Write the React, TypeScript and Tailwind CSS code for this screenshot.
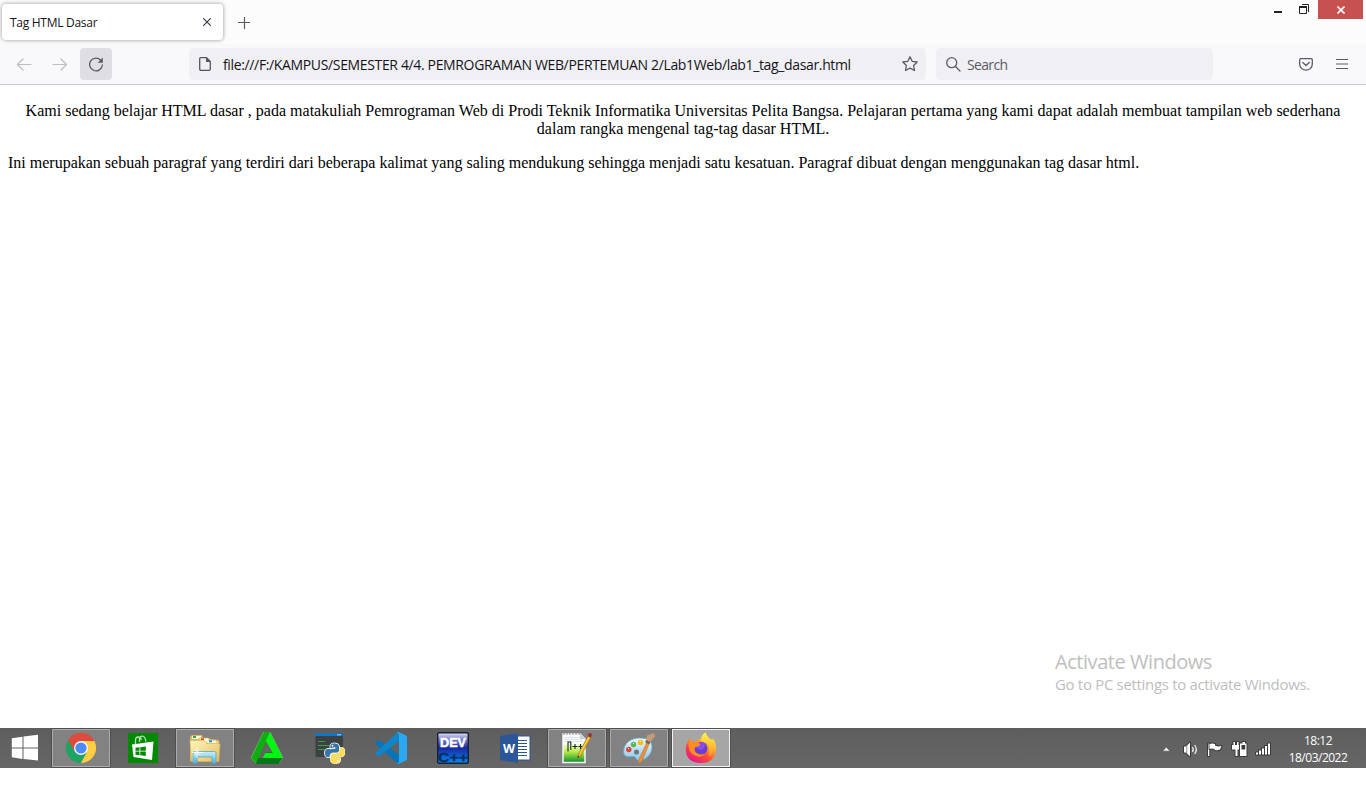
import type { ReactNode } from "react";

const UI = "font-['Open_Sans','Noto_Sans',sans-serif]";

function TaskIcon({ children }: { children: ReactNode }) {
  return (
    <svg width="32" height="32" viewBox="0 0 32 32" className="block">
      {children}
    </svg>
  );
}

function Chrome() {
  return (
    <TaskIcon>
      <path d="M3 8.500A15 15 0 0 1 29.400 9H16L9.600 19.500z" fill="#dd4b3e" />
      <path d="M3.100 8.300A15 15 0 0 0 16 31L22.200 19.500 16 16 9.600 19.500z" fill="#1da462" />
      <path d="M16 31A15 15 0 0 0 29.400 9H16L22.200 19.600z" fill="#ffcd41" />
      <circle cx="16" cy="16" r="7" fill="#f4f4f4" />
      <circle cx="16" cy="16" r="5.600" fill="#4c8bf5" />
    </TaskIcon>
  );
}

function Store() {
  return (
    <TaskIcon>
      <rect x="1" y="1" width="30" height="30" fill="#008a00" />
      <path d="M8.500 12V8.500Q8.500 5 11 5t3.500 3M12.500 10V6.500q.5-2.300 3-2.300t3.500 5.500" fill="none" stroke="#b5e0b5" strokeWidth="1.300" />
      <path d="M5 12.500 26.500 9.500 25 28 6.500 25z" fill="#fff" />
      <path d="M8.500 15.800l4-.5v3.500h-4zM13.300 15.200l5.500-.7v4.300h-5.500zM8.500 19.600h4v3.600l-4-.5zM13.300 19.600h5.500v4.500l-5.500-.8z" fill="#008a00" />
    </TaskIcon>
  );
}

function Explorer() {
  return (
    <TaskIcon>
      <defs>
        <linearGradient id="folder" x1="0" x2="1" y2="1">
          <stop stopColor="#fff6bd" />
          <stop offset="1" stopColor="#e5bd5c" />
        </linearGradient>
        <linearGradient id="stand" x1="0" x2="0" y2="1">
          <stop stopColor="#cceef9" />
          <stop offset="1" stopColor="#52b3db" />
        </linearGradient>
      </defs>
      <path d="M1 5 3 3h10l1 3 16 2v21H1z" fill="#dcb95f" />
      <path d="M3 4h9v3H3z" fill="#fffbe8" />
      <path d="M4 4h3v2H4z" fill="#19b23b" />
      <path d="M10 6h10l1 3h9v20H10z" fill="#f5dc91" stroke="#d2a94c" strokeWidth=".6" />
      <path d="M12 6.500h7v3h-7zM19 8.500h8v2.500h-8z" fill="#fff9e5" />
      <path d="M12 6.300h3v2h-3z" fill="#df4d24" />
      <path d="M20 8.300h3v2h-3z" fill="#168de2" />
      <path d="M1 8.500h14l2.500 3H30l1 1-1.500 17H2.500z" fill="url(#folder)" stroke="#d7b45b" strokeWidth=".7" />
      <path d="M4 21q0-1.500 1.500-1.500h20q1.500 0 1.500 1.500v10.300h-4V25H8v6.300H4z" fill="url(#stand)" stroke="#54a7cb" strokeWidth=".8" />
      <path d="M8 15v11M3 20.500h11M5 17.500l6 6M11 17.500l-6 6" stroke="#fff" strokeWidth=".8" />
    </TaskIcon>
  );
}

function Triangle() {
  return (
    <TaskIcon>
      <path d="M12.500 0H19L13 14 5 31.500 0 26z" fill="#10ad10" />
      <path d="M0 26h13l1.500-5.500h7.500L32 26l-4 6H5z" fill="#087719" />
      <path d="M19 0 32 26H11.800l2.400-5h7.600L14.500 8.500z" fill="#00f510" />
      <path d="M14.500 8.500 5 31.500 0 26 12.500 0H19z" fill="#10ad10" />
      <path d="M16.300 13.500 19.800 20h-6.300z" fill="#5d6b5d" />
      <path d="M12.500 0 0 26l5 5.500M28 31.500l4-5.500L19 0" fill="none" stroke="#8acb8a" strokeWidth=".5" />
    </TaskIcon>
  );
}

function Python() {
  return (
    <TaskIcon>
      <path d="M2.500 2H30v23H2.500z" fill="#3c4142" />
      <path d="M2 1.500h28V4H2z" fill="#0878ce" />
      <path d="M24 2h4v1.500h-4z" fill="#6cb9eb" />
      <path d="M5 9.500h7M5 13.500h11M5 17.500h7" stroke="#3d9b49" strokeWidth="1" />
      <path d="M17 17v-3q0-3 4.500-3t5 3v4.500q0 2.500-2.500 2.500h-4.500q-2.500 0-2.500 3v1.500h-2q-3.500 0-3.500-4.500t3.500-4.500h7v-1z" fill="#3774a8" stroke="#eef4f8" strokeWidth=".9" />
      <path d="M26.500 15.500h2q3.500 0 3.500 4.500t-3.500 4.800h-6v1h5v2.700q0 3-5 3t-5-3V24q0-2.500 2.500-2.500H24q2.500 0 2.500-3z" fill="#ffdc50" stroke="#fff5d0" strokeWidth=".9" />
      <circle cx="19.500" cy="13.700" r=".9" fill="#fff" />
      <circle cx="24.800" cy="28.800" r=".9" fill="#fff" />
    </TaskIcon>
  );
}

function Code() {
  return (
    <TaskIcon>
      <path d="M.5 11 2.500 8.500Q3.800 7.500 5 8.500L24 23v8.500q-1 .5-2-.5L1 12.500Q.2 11.800.5 11z" fill="#0874ba" />
      <path d="M.5 20.500 22 1q1-1 2-.5V9L5 23.700q-1.200 1-2.500 0L.5 22q-.8-.8 0-1.500z" fill="#1185c9" />
      <path d="M23.500 0 31 3.500q1 .5 1 1.500v22q0 1-1 1.500L23.500 32q-1 0-2-1 2.500.5 2.500-1.500v-27q0-2-2.500-1.500 1-1 2-1z" fill="#2aa9f2" />
    </TaskIcon>
  );
}

function DevCpp() {
  return (
    <TaskIcon>
      <defs>
        <linearGradient id="dev" x1="0" x2="0" y2="1">
          <stop stopColor="#e3e3f8" />
          <stop offset=".22" stopColor="#7a80ce" />
          <stop offset=".5" stopColor="#1828a0" />
          <stop offset="1" stopColor="#078cfb" />
        </linearGradient>
      </defs>
      <rect x=".7" y=".7" width="30.600" height="30.600" rx="1.500" fill="url(#dev)" stroke="#17202c" strokeWidth="1.400" />
      <text x="3" y="15.200" textLength="26" lengthAdjust="spacingAndGlyphs" fontSize="13" fontWeight="700" fontFamily="Liberation Sans, sans-serif" fill="#fff" stroke="#fff" strokeWidth=".5">DEV</text>
      <text x="1" y="29.500" textLength="30" lengthAdjust="spacingAndGlyphs" fontSize="13" fontWeight="700" fontFamily="Liberation Sans, sans-serif" fill="#05305f" stroke="#05305f" strokeWidth=".4">C++</text>
    </TaskIcon>
  );
}

function Word() {
  return (
    <TaskIcon>
      <path d="M18 4h13v24H18z" fill="#fff" stroke="#2b579a" />
      <path d="M19 8.500h9M19 11.500h9M19 14.500h9M19 17.500h9M19 20.500h9M19 23.500h9" stroke="#2b579a" strokeWidth="1.100" />
      <path d="M1 4 19 1v30L1 28z" fill="#2b579a" />
      <text x="4" y="20.500" textLength="12" lengthAdjust="spacingAndGlyphs" fontSize="13" fontWeight="700" fontFamily="Open Sans, sans-serif" fill="#fff">W</text>
    </TaskIcon>
  );
}

function Notepad() {
  return (
    <TaskIcon>
      <defs>
        <linearGradient id="note" x1="0" x2="0" y2="1">
          <stop offset=".3" stopColor="#fff" />
          <stop offset=".62" stopColor="#b9ed48" />
          <stop offset="1" stopColor="#078c29" />
        </linearGradient>
      </defs>
      <path d="M2 2h17l5 5v23.500H2z" fill="url(#note)" stroke="#f6f6f6" strokeWidth="1.500" />
      <path d="M3 5.500h16M3 7.500h18M3 9.500h19" stroke="#c7dbe8" strokeWidth=".7" />
      <path d="M3 1v2M6 1v2M9 1v2M12 1v2M15 1v2M18 1v2" stroke="#666" strokeWidth=".7" />
      <path d="M19 2v5h5z" fill="#c7ccd0" />
      <path d="M7 19.500V10h2.800v8M11.500 14.500h5M14 12v5M17.500 14.500h4M19.500 12v5" fill="none" stroke="#19291c" strokeWidth="1.100" />
      <path d="m16.500 26 1-4L27 4l3 1.500L19.500 24z" fill="#eeb521" stroke="#9c6922" strokeWidth=".6" />
      <path d="m19 22 9-17" stroke="#ffe366" strokeWidth=".8" />
      <path d="m26.500 4 1.500-3q3-.5 3 2l-1.300 2.700z" fill="#9c3434" />
      <path d="m16.500 26 .5-2 1.400.7z" fill="#222" />
    </TaskIcon>
  );
}

function Paint() {
  return (
    <TaskIcon>
      <defs>
        <linearGradient id="palette" x1="0" x2="0" y2="1">
          <stop stopColor="#eefaff" />
          <stop offset="1" stopColor="#8dc5e5" />
        </linearGradient>
      </defs>
      <path d="M.6 20C.6 11 8 6 17 6q12 0 12 9 0 4-2 7-3 5-9 6.500-4 1-5-2-1-3-4-2Q.6 26 .6 20z" fill="url(#palette)" stroke="#64acd2" strokeWidth=".8" />
      <ellipse cx="13.500" cy="20" rx="2.500" ry="2.600" fill="#667883" />
      <circle cx="5.800" cy="17.500" r="2.700" fill="#df4434" />
      <circle cx="10.500" cy="12.500" r="2.700" fill="#55b94b" />
      <circle cx="17.500" cy="10.500" r="2.800" fill="#f4bd25" />
      <path d="M5 16.500h1M10 11.500h1M17 9.500h1" stroke="#fff" strokeWidth="1" />
      <path d="m24 10 2.500 1-8 19-3 2 .2-4z" fill="#eb903f" stroke="#bb6727" strokeWidth=".5" />
      <path d="m23 8.500 1-5L31 1l1 3.500-5 5.500z" fill="#c69c78" />
      <path d="m22.800 8 4.700 2-1 2.300-4-1.600z" fill="#806050" />
    </TaskIcon>
  );
}

function Firefox() {
  return (
    <TaskIcon>
      <defs>
        <linearGradient id="fire" x1=".9" y1=".05" x2=".25" y2="1">
          <stop stopColor="#fff44f" />
          <stop offset=".35" stopColor="#ffad29" />
          <stop offset=".65" stopColor="#ff4b36" />
          <stop offset="1" stopColor="#e5138f" />
        </linearGradient>
        <linearGradient id="flame" x1="0" x2="0" y2="1">
          <stop stopColor="#fff34c" />
          <stop offset="1" stopColor="#ff9627" />
        </linearGradient>
      </defs>
      <path d="M2.500 11 4 6.500 7 10l3.500-.5Q14 6 17 7.500q-1-4 3.500-7 1 4 5 6.500l2 1v-2q4 5 3.500 11-.8 14-15.300 14Q.8 30.500.8 17q0-3.500 1.700-6z" fill="url(#fire)" />
      <circle cx="16" cy="16.500" r="6.500" fill="#6640d3" />
      <path d="M13 11q6-3 9 2l-3-1q2 3-1 5-4 2-7-2z" fill="#8a4be6" />
      <path d="M16 8.500q-.5-5 4.500-8 1 4 5 7 4.500 5.500 1.500 14-1 2-3 3Q26 13 21.500 11q-2.500-.5-5.500-2.500z" fill="url(#flame)" />
      <path d="M3.500 8.500 4.500 6.500 7 10q5-1 8 2l-.5 2-5 1.500q-.5 5 4 6.500 3 1 6-.5-2 4-7 3-8-2-9-10z" fill="#ff8d25" />
    </TaskIcon>
  );
}

const tasks = [
  { name: "Chrome", icon: <Chrome />, state: "open" },
  { name: "Store", icon: <Store />, state: "idle" },
  { name: "File Explorer", icon: <Explorer />, state: "open" },
  { name: "Triangle", icon: <Triangle />, state: "idle" },
  { name: "Python", icon: <Python />, state: "idle" },
  { name: "Visual Studio Code", icon: <Code />, state: "idle" },
  { name: "Dev-C++", icon: <DevCpp />, state: "idle" },
  { name: "Word", icon: <Word />, state: "idle" },
  { name: "Notepad++", icon: <Notepad />, state: "open" },
  { name: "Paint", icon: <Paint />, state: "open" },
  { name: "Firefox", icon: <Firefox />, state: "active" },
];

const taskStyles: Record<string, string> = {
  idle: "border border-transparent",
  open: "border border-[#acacac] bg-[#828282] outline outline-[#4e4e4e]",
  active: "border border-[#f2f2f2] bg-[#a6a6a6] outline outline-[#505050]",
};

function TitleBar() {
  return (
    <div className="flex h-11 items-start bg-[#fcfcfd]">
      <div className="mt-1 ml-0.5 flex h-9 w-[221px] items-center justify-between rounded bg-white pt-0.5 pr-3 pl-2 shadow-[0_0_4px_rgba(0,0,0,0.42)]">
        <span className={`${UI} text-[12px] tracking-[-0.28px] text-[#15141a]`}>Tag HTML Dasar</span>
        <svg width="8" height="8" viewBox="0 0 8 8" className="mb-0.5 block">
          <path d="m.300.300 7.400 7.400M7.700.300.300 7.700" stroke="#3a3944" strokeWidth="1.200" />
        </svg>
      </div>
      <svg width="12" height="12" viewBox="0 0 12 12" className="mt-[17px] ml-[15px] block">
        <path d="M6.500 0v12M0 5.500h12" stroke="#5b5b66" strokeWidth="1.200" />
      </svg>
      <div className="ml-auto flex pr-[3px]">
        <svg width="45" height="19" viewBox="0 0 45 19">
          <path d="M1 11h8v2H1z" fill="#222" />
          <path d="M26.500 6.500h7v7h-7zM29 4.500h6.500V12" fill="none" stroke="#222" />
          <path d="M26 6h8v2h-8z" fill="#222" />
        </svg>
        <div className="flex h-[19px] w-[45px] items-center justify-center bg-[#c75050]">
          <svg width="8" height="8" viewBox="0 0 8 8">
            <path d="m.5.5 7 7M7.500.5l-7 7" stroke="#fff" strokeWidth="1.600" />
          </svg>
        </div>
      </div>
    </div>
  );
}

function Toolbar() {
  return (
    <div className="flex h-[41px] items-center border-b border-[#cccccf] bg-[#f9f9fb] pl-2">
      <div className="flex gap-1">
        <div className="flex size-8 items-center justify-center">
          <svg width="16" height="16" viewBox="0 0 16 16" fill="none" stroke="#bdbdc2" strokeWidth="1.200" strokeLinecap="round" strokeLinejoin="round">
            <path d="M15 8.500H1.500M7 3 1.500 8.500 7 14" />
          </svg>
        </div>
        <div className="flex size-8 items-center justify-center">
          <svg width="16" height="16" viewBox="0 0 16 16" fill="none" stroke="#bdbdc2" strokeWidth="1.200" strokeLinecap="round" strokeLinejoin="round">
            <path d="M1 8.500h13.500M9 3l5.500 5.500L9 14" />
          </svg>
        </div>
        <div className="flex size-8 items-center justify-center rounded bg-[#dedee3]">
          <svg width="16" height="16" viewBox="0 0 16 16">
            <path d="M12.800 4.200A6.400 6.400 0 1 0 14.400 9" fill="none" stroke="#5b5b66" strokeWidth="1.300" strokeLinecap="round" />
            <path d="M14.800 1.500v5.300H9.700z" fill="#5b5b66" />
          </svg>
        </div>
      </div>
      <div className="ml-[77px] flex h-8 w-[737px] items-center rounded bg-[#f0f0f4]">
        <svg width="12" height="14" viewBox="0 0 12 14" className="ml-2.5 block">
          <path d="M2 .7h5.500l3.800 3.800V12q0 1.300-1.300 1.300H2Q.7 13.300.7 12V2Q.7.700 2 .7z" fill="none" stroke="#55555f" strokeWidth="1.300" />
          <path d="M7 .5v4.600h4.700z" fill="#55555f" />
        </svg>
        <span className={`${UI} mt-px ml-3 text-[14px] tracking-[-0.355px] whitespace-nowrap text-[#15141a]`}>
          file:///F:/KAMPUS/SEMESTER 4/4. PEMROGRAMAN WEB/PERTEMUAN 2/Lab1Web/lab1_tag_dasar.html
        </span>
        <svg width="16" height="16" viewBox="0 0 16 16" className="mr-2 ml-auto block">
          <path d="m8 .8 2.200 4.500 5 .7-3.600 3.500.9 5L8 12.200l-4.500 2.300.9-5L.8 6l5-.7z" fill="none" stroke="#5b5b66" strokeWidth="1.300" strokeLinejoin="round" />
        </svg>
      </div>
      <div className="ml-2.5 flex h-8 w-[277px] items-center rounded bg-[#f0f0f4]">
        <svg width="15" height="15" viewBox="0 0 15 15" className="ml-2.5 block" fill="none" stroke="#5b5b66" strokeWidth="1.300">
          <circle cx="5.700" cy="5.700" r="5" />
          <path d="m9.300 9.300 4.700 4.700" strokeLinecap="round" />
        </svg>
        <span className={`${UI} mt-px ml-1.5 text-[14px] tracking-[-0.65px] text-[#5b5b66]`}>Search</span>
      </div>
      <div className="ml-auto flex items-center gap-[23px] pr-[18px]">
        <svg width="14" height="13" viewBox="0 0 14 13" fill="none" stroke="#5b5b66" strokeWidth="1.300" strokeLinecap="round" strokeLinejoin="round">
          <path d="M1.700.7h10.600q1 0 1 1v4.200a6.300 6.300 0 0 1-12.600 0V1.700q0-1 1-1zM3.800 4.500 7 7.500l3.200-3" />
        </svg>
        <svg width="12" height="10" viewBox="0 0 12 10">
          <path d="M0 .500h12M0 5h12M0 9.500h12" stroke="#5b5b66" strokeWidth="1.200" />
        </svg>
      </div>
    </div>
  );
}

function Tray() {
  return (
    <svg width="116" height="26" viewBox="0 0 116 26" className="block">
      <path d="M4.500 15.200 8.300 11l3.900 4.200z" fill="#f2f2f2" stroke="#4a4a4a" strokeWidth=".6" />
      <g stroke="#3a3a3a" strokeWidth="2" strokeLinejoin="round" paintOrder="stroke" fill="#fff">
        <path d="M26 10.500h2l4-4v14l-4-4h-2z" />
        <path d="M50 7.500h1.300V20H50z" />
        <path d="M51.500 8q3-1 5.500 0v1.500q3 1.500 6.500.5L62 13.500q-3 1.500-5.500.3V13q-2-.8-5 0z" />
        <path d="M75.500 6H77v3h2V6h1.500v3H82v4.500h-2.500V20h-2v-6.500H74V9h1.500z" />
        <path fillRule="evenodd" d="M84.500 6h2.500v1.500h1.500V20H82V7.500h2.500z" />
        <path d="M98 16.500h2v2h-2zM101 14.500h2v4h-2zM104 12.500h2v6h-2zM107 10h2v8.500h-2zM110 7.500h2v11h-2z" />
      </g>
      <path d="M83.500 9h3.700v4.500h-3.700z" fill="#3a3a3a" />
      <path d="M28.800 9.500v8" stroke="#777" strokeWidth=".8" />
      <path d="M34.300 11q2 2.500 0 5M36.600 9q3.500 4.500 0 9" fill="none" stroke="#eee" strokeWidth="1.200" />
    </svg>
  );
}

function TaskBar() {
  return (
    <div className="flex h-10 items-center bg-linear-to-b from-[#5e5e5e] to-[#666666]">
      <div className="flex w-[52px] justify-center pr-[2px]">
        <svg width="28" height="28" viewBox="0 0 28 28" className="block">
          <path d="M.800 4.300 11.500 2.800v10.700H.8zM12.500 2.600 27 .7v12.800H12.500zM.8 14.500h10.700V25L.8 23.300zM12.500 14.500H27v12L12.500 25z" fill="#fff" />
        </svg>
      </div>
      <div className="flex gap-1">
        {tasks.map((task) => (
          <div key={task.name} className={`flex h-[38px] w-[58px] items-center justify-center ${taskStyles[task.state]}`}>
            {task.icon}
          </div>
        ))}
      </div>
      <div className="mt-0.5 mr-3 ml-auto">
        <Tray />
      </div>
      <div className={`${UI} mt-0.5 mr-4 flex w-[64px] flex-col items-center text-[12px] leading-[17px] tracking-[-0.5px] whitespace-nowrap text-white`}>
        <span>18:12</span>
        <span>18/03/2022</span>
      </div>
    </div>
  );
}

export default function App() {
  return (
    <div className="flex h-[800px] w-[1366px] flex-col overflow-hidden bg-white">
      <TitleBar />
      <Toolbar />
      <main className="flex flex-1 flex-col px-2 pt-[17px]">
        <p className="text-center font-['Liberation_Serif',serif] text-[16px] leading-[18px] text-black">
          <span className="tracking-[0.008px]">
            Kami sedang belajar HTML dasar , pada matakuliah Pemrograman Web di Prodi Teknik Informatika Universitas Pelita Bangsa. Pelajaran pertama yang kami dapat adalah membuat tampilan web sederhana
          </span>
          <br />
          dalam rangka mengenal tag-tag dasar HTML.
        </p>
        <p className="mt-4 font-['Liberation_Serif',serif] text-[16px] leading-[18px] text-black">
          Ini merupakan sebuah paragraf yang terdiri dari beberapa kalimat yang saling mendukung sehingga menjadi satu kesatuan. Paragraf dibuat dengan menggunakan tag dasar html.
        </p>
        <div className={`${UI} mt-auto mr-[39px] mb-[34px] flex w-[264px] flex-col self-end whitespace-nowrap text-[#bebebe]`}>
          <span className="text-[20px] leading-6 tracking-[-0.45px]">Activate Windows</span>
          <span className="text-[15px] leading-5 tracking-[-0.32px]">Go to PC settings to activate Windows.</span>
        </div>
      </main>
      <TaskBar />
      <div className="h-8 bg-white" />
    </div>
  );
}
